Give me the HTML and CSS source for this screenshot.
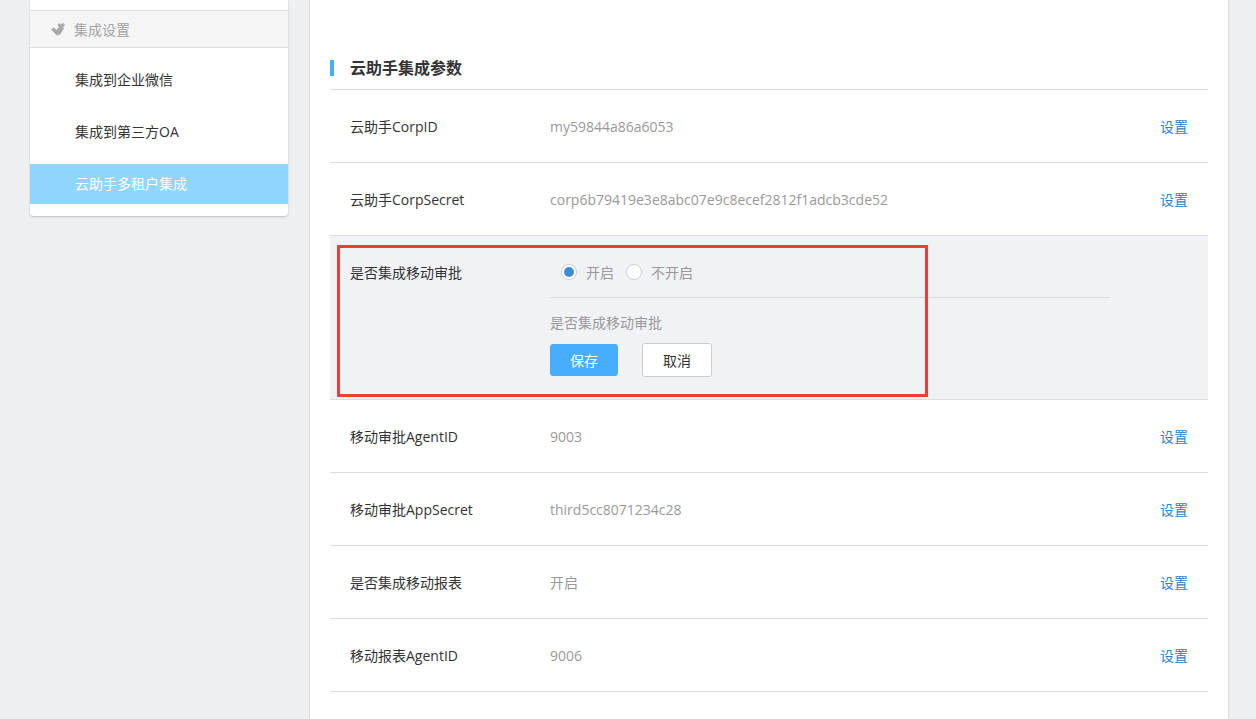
FILE: index.html
```html
<!DOCTYPE html>
<html lang="zh-CN">
<head>
<meta charset="utf-8">
<title>云助手集成参数</title>
<link rel="stylesheet" href="styles.css">
</head>
<body>
<div class="page">
  <aside class="sidebar">
    <div class="card">
      <div class="card-head">
        <svg class="head-icon" width="16" height="14" viewBox="0 0 16 14"><path d="M1 7.5 L4 5.5 L6.5 8 L9 5 L7.5 3 L9.5 1 L11 2.8 L13 .8 L15 3 L13 5 L14 6.5 L10 12.5 L7 13.5 Z" fill="#a9a9a9"/></svg>
        <span>集成设置</span>
      </div>
      <ul class="menu">
        <li class="menu-item">集成到企业微信</li>
        <li class="menu-item">集成到第三方OA</li>
        <li class="menu-item active">云助手多租户集成</li>
      </ul>
    </div>
  </aside>
  <main class="panel">
    <h2 class="title">云助手集成参数</h2>
    <div class="row">
      <div class="label">云助手CorpID</div>
      <div class="value">my59844a86a6053</div>
      <a class="action">设置</a>
    </div>
    <div class="row">
      <div class="label">云助手CorpSecret</div>
      <div class="value">corp6b79419e3e8abc07e9c8ecef2812f1adcb3cde52</div>
      <a class="action">设置</a>
    </div>
    <div class="row editing">
      <div class="label edit-label">是否集成移动审批</div>
      <div class="edit-body">
        <div class="radios">
          <label class="radio"><i class="dot on"></i>开启</label>
          <label class="radio"><i class="dot"></i>不开启</label>
        </div>
        <p class="hint">是否集成移动审批</p>
        <div class="buttons">
          <button class="btn primary">保存</button>
          <button class="btn">取消</button>
        </div>
      </div>
      <div class="highlight"></div>
    </div>
    <div class="row">
      <div class="label">移动审批AgentID</div>
      <div class="value">9003</div>
      <a class="action">设置</a>
    </div>
    <div class="row">
      <div class="label">移动审批AppSecret</div>
      <div class="value">third5cc8071234c28</div>
      <a class="action">设置</a>
    </div>
    <div class="row">
      <div class="label">是否集成移动报表</div>
      <div class="value">开启</div>
      <a class="action">设置</a>
    </div>
    <div class="row">
      <div class="label">移动报表AgentID</div>
      <div class="value">9006</div>
      <a class="action">设置</a>
    </div>
  </main>
</div>
</body>
</html>
```
FILE: styles.css
```css
* { box-sizing: border-box; }
html, body { margin: 0; height: 719px; overflow: hidden; }
body {
  background: #eeeff1;
  font-family: "Open Sans", "Noto Sans CJK SC", sans-serif;
  font-size: 14px;
  color: #333;
}
.page { display: flex; align-items: flex-start; padding-left: 30px; height: 719px; }
.sidebar { width: 258px; margin-right: 21px; flex: none; padding-top: 0; }
.card {
  background: #fff;
  border-radius: 0 0 4px 4px;
  box-shadow: 0 1px 2px rgba(0,0,0,.2);
  padding: 10px 0 12px;
  height: 216px;
}
.card-head {
  height: 38px;
  display: flex;
  align-items: center;
  gap: 8px;
  padding-left: 20px;
  background: #f5f5f5;
  border-top: 1px solid #dfdfe1;
  border-bottom: 1px solid #dfdfe1;
  color: #a3a3a3;
}
.head-icon { flex: none; }
.menu { list-style: none; margin: 0; padding: 12px 0 0; }
.menu-item { height: 40px; line-height: 40px; padding-left: 45px; margin-bottom: 12px; color: #333; }
.menu-item.active { background: #90d5fc; color: #fff; margin-bottom: 0; }
.panel {
  width: 920px;
  height: 719px;
  flex: none;
  background: #fff;
  border-left: 1px solid #dcdcde;
  border-right: 1px solid #dcdcde;
  padding: 58px 20px 0;
}
.title {
  margin: 0;
  height: 32px;
  padding: 0 0 11px 20px;
  position: relative;
  font-size: 16px;
  font-weight: 700;
  line-height: 20px;
  color: #333;
  border-bottom: 1px solid #dcdcde;
}
.title::before {
  content: "";
  position: absolute;
  left: 0;
  top: 2px;
  width: 4px;
  height: 16px;
  background: #46adff;
}
.row {
  display: flex;
  align-items: center;
  height: 73px;
  padding: 0 20px;
  border-bottom: 1px solid #dcdcde;
}
.label { width: 200px; flex: none; color: #333; }
.value { flex: 1; color: #999; }
.action { color: #2f80c8; }
.editing {
  position: relative;
  height: 164px;
  align-items: flex-start;
  background: #f1f2f6;
}
.edit-label { margin-top: 26px; }
.edit-body { width: 560px; }
.radios {
  display: flex;
  align-items: center;
  gap: 12px;
  height: 62px;
  padding: 11px 0 0 11px;
  border-bottom: 1px solid #dcdcde;
}
.radio { display: flex; align-items: center; gap: 9px; color: #999; }
.dot {
  width: 16px;
  height: 16px;
  border-radius: 50%;
  border: 1px solid #d0d0d0;
  background: #fff;
  display: block;
  position: relative;
}
.dot.on::after {
  content: "";
  position: absolute;
  left: 2px;
  top: 2px;
  width: 10px;
  height: 10px;
  border-radius: 50%;
  background: #3a8ed6;
}
.hint { margin: 15px 0 10px; line-height: 20px; color: #999; }
.buttons { display: flex; align-items: center; gap: 24px; }
.btn {
  width: 70px;
  height: 34px;
  border: 1px solid #ccc;
  border-radius: 3px;
  background: #fff;
  color: #333;
  font: inherit;
  padding: 0;
}
.primary { width: 68px; height: 32px; background: #46adff; border-color: #46adff; color: #fff; }
.highlight {
  position: absolute;
  left: 7px;
  top: 9px;
  width: 591px;
  height: 152px;
  border: 3px solid #f23c3c;
  pointer-events: none;
}
```
